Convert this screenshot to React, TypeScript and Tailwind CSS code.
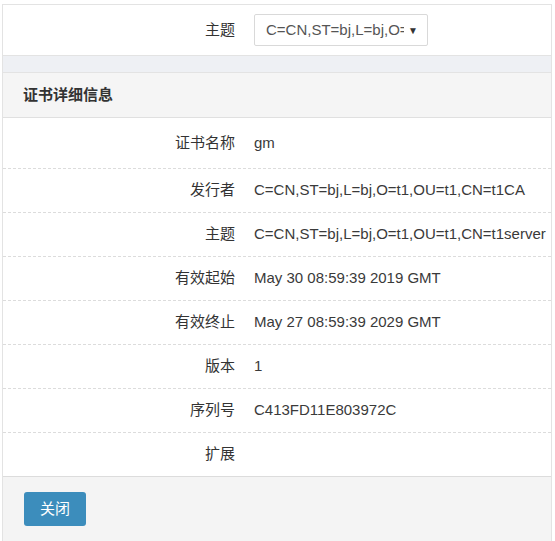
const rows = [
  { label: "证书名称", value: "gm" },
  { label: "发行者", value: "C=CN,ST=bj,L=bj,O=t1,OU=t1,CN=t1CA" },
  { label: "主题", value: "C=CN,ST=bj,L=bj,O=t1,OU=t1,CN=t1server" },
  { label: "有效起始", value: "May 30 08:59:39 2019 GMT" },
  { label: "有效终止", value: "May 27 08:59:39 2029 GMT" },
  { label: "版本", value: "1" },
  { label: "序列号", value: "C413FD11E803972C" },
  { label: "扩展", value: "" },
];

export default function App() {
  return (
    <div
      className="w-[555px] h-[541px] bg-white pt-[4px] overflow-hidden text-[15px] text-[#333]"
      style={{ fontFamily: '"Liberation Sans", Arial, "Noto Sans CJK SC", sans-serif' }}
    >
      <div className="ml-[2px] w-[550px] h-[537px] border-l border-r border-t border-[#e3e3e3] flex flex-col">
        {/* filter row */}
        <div className="h-[50px] flex items-center bg-white">
          <div className="w-[232px] text-right">主题</div>
          <div className="ml-[19px] w-[174px] h-[32px] border border-[#d9d9d9] rounded-[2px] flex items-center pl-[11px] pr-[9px] text-[#555]">
            <div className="flex-1 overflow-hidden whitespace-nowrap">C=CN,ST=bj,L=bj,O=t1,OU=t1</div>
            <span className="ml-[4px] text-[10px] text-[#333]">▼</span>
          </div>
        </div>
        <div className="h-[18px] bg-[#eef0f4] border-t border-b border-[#e3e3e3]"></div>

        {/* panel header */}
        <div className="h-[45px] bg-[#f5f5f5] border-b border-[#e0e0e0] flex items-center pl-[20px] font-bold text-[#333]">
          证书详细信息
        </div>

        {/* detail rows */}
        <div>
          {rows.map((r, i) => (
            <div
              key={i}
              className={
                i === 0
                  ? "h-[51px] flex items-center border-b border-dashed border-[#dcdcdc]"
                  : i < rows.length - 1
                  ? "h-[44px] flex items-center border-b border-dashed border-[#dcdcdc]"
                  : "h-[43px] flex items-center"
              }
            >
              <div className="w-[232px] text-right text-[#333]">{r.label}</div>
              <div className="ml-[19px] whitespace-nowrap text-[#3a3a3a]">{r.value}</div>
            </div>
          ))}
        </div>

        {/* footer */}
        <div className="flex-1 bg-[#f4f4f4] border-t border-[#dcdcdc] pt-[15px] pl-[21px]">
          <button className="w-[62px] h-[34px] rounded-[3px] bg-[#3c8dbc] text-white text-[15px]">关闭</button>
        </div>
      </div>
    </div>
  );
}
